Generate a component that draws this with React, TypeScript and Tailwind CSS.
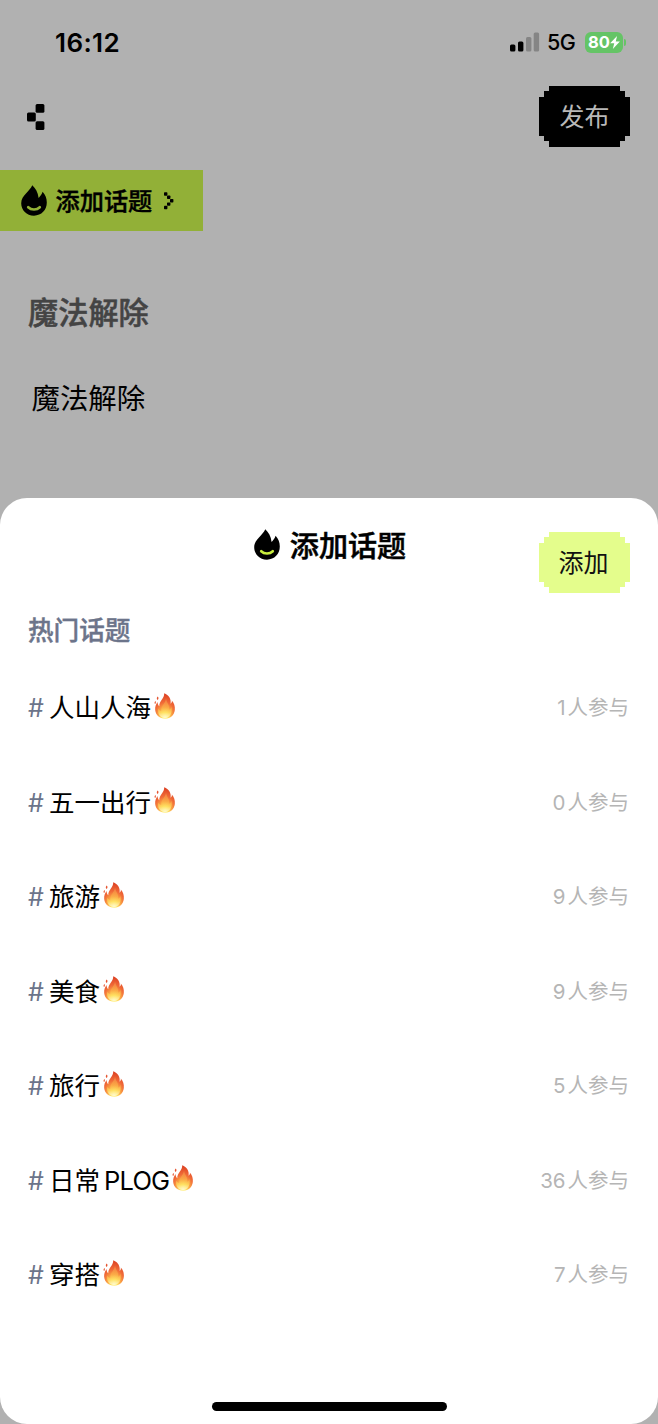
import type { ReactNode } from "react";

const topics = [
  { name: "人山人海", count: 1 },
  { name: "五一出行", count: 0 },
  { name: "旅游", count: 9 },
  { name: "美食", count: 9 },
  { name: "旅行", count: 5 },
  { name: "日常", latin: "PLOG", count: 36 },
  { name: "穿搭", count: 7 },
];

const FlameLogo = ({ smile }: { smile: string }) => (
  <svg width="26" height="31" viewBox="0 0 26 31" className="shrink-0">
    <path
      d="M11.3 0.3C14.4 3.2 17 7.2 17.6 13C19.4 11.2 20.9 9.2 21.6 6.8C24.5 10 25.8 13.5 25.8 17.6C25.8 25 20.4 30.7 13 30.7C5.6 30.7 0.2 25.1 0.2 18.2C0.2 14.2 2.4 11.3 5.2 8.3C7.8 5.5 9.8 3.4 11.3 0.3Z"
      fill="#000"
    />
    <path d="M7.2 22.2C10.3 25.2 15.7 25.2 18.8 22.2" fill="none" stroke={smile} strokeWidth="2.6" strokeLinecap="round" />
  </svg>
);

const Flame = () => (
  <svg width="22" height="26" viewBox="0 0 22 26" className="ml-[3px] -mt-[5px] shrink-0">
    <defs>
      <radialGradient id="flame" cx="0.5" cy="0.9" r="0.88">
        <stop offset="0" stopColor="#fffbb0" />
        <stop offset="0.18" stopColor="#ffe666" />
        <stop offset="0.38" stopColor="#fba544" />
        <stop offset="0.62" stopColor="#f06a37" />
        <stop offset="1" stopColor="#dc4023" />
      </radialGradient>
      <linearGradient id="flameCore" x1="0" y1="0" x2="0" y2="1">
        <stop offset="0" stopColor="#f58b45" />
        <stop offset="0.45" stopColor="#fbae48" />
        <stop offset="0.72" stopColor="#ffdf60" />
        <stop offset="1" stopColor="#fffde6" />
      </linearGradient>
    </defs>
    <path
      d="M10.2 0.2C14.7 2 17.4 5.6 16.6 10.8C17.7 10.1 18.1 9 17.8 7.6C20.1 9.8 21.2 13.3 20.8 17C20.3 22.2 16.5 25.7 11.3 25.7C5.7 25.7 1.6 22.2 1.2 17C0.9 13.8 2 11.2 3.6 9.1C3.7 11.2 4.2 12.5 5.3 13.2C4.9 8.1 10.6 5.4 10.2 0.2Z"
      fill="url(#flame)"
    />
    <path
      d="M12 5.5C12.6 10 15.8 12.2 15.2 16.6C16.3 16 17.2 14.8 17.3 13.4C19 19.4 15.8 24.9 11.1 24.9C6.4 24.9 3.2 20.8 4.3 15.4C4.9 16.9 6.1 17.8 7.4 17.9C6.6 13 11.6 10.4 12 5.5Z"
      fill="url(#flameCore)"
      opacity="0.7"
    />
    <path d="M3.6 3.5C4.9 4.6 4.7 6 3.4 6.9C2.5 5.9 2.6 4.7 3.6 3.5Z" fill="#e5532f" />
    <path d="M1.5 8C2.2 9 1.9 10.3 1 11C0.3 9.9 0.4 8.8 1.5 8Z" fill="#e5532f" />
  </svg>
);

// button with stepped pixel corners
const PixelButton = ({ className, children }: { className: string; children: ReactNode }) => (
  <button
    className={`flex h-[61px] w-[91px] items-center justify-center pt-[3px] text-[25px] [clip-path:polygon(10px_0,81px_0,81px_5px,86px_5px,86px_11px,91px_11px,91px_50px,86px_50px,86px_55px,81px_55px,81px_61px,10px_61px,10px_55px,5px_55px,5px_50px,0_50px,0_11px,5px_11px,5px_5px,10px_5px)] ${className}`}
  >
    {children}
  </button>
);

const StatusBar = () => (
  <div className="flex h-[86px] items-center justify-between pr-[32px] pb-[2px] pl-[55px]">
    <span className="text-[26px] font-semibold tracking-[0.4px]">16:12</span>
    <div className="flex items-center">
      <svg width="30" height="20" viewBox="0 0 30 20">
        <rect x="0" y="12.5" width="5.4" height="7" rx="1.5" />
        <rect x="8" y="9.5" width="5.4" height="10" rx="1.5" />
        <rect x="16" y="5" width="5.4" height="14.5" rx="1.5" fill="#858585" />
        <rect x="23.7" y="0.5" width="5.4" height="19" rx="1.5" fill="#858585" />
      </svg>
      <span className="ml-[7px] w-[30px] text-[21.5px] font-medium tracking-[-0.5px]">5G</span>
      {/* battery */}
      <div className="ml-[8px] flex h-[21px] w-[38px] items-center justify-center rounded-[6px] bg-[#65c466] text-white">
        <span className="text-[16.5px] font-bold">80</span>
        <svg width="10" height="13" viewBox="0 0 9 12">
          <path d="M6.4 0L0 6.8H3.8L2.5 12L9 5H5.2Z" fill="#fff" />
        </svg>
      </div>
      <div className="ml-px h-[7px] w-[2px] rounded-r-full bg-[#65c466]" />
    </div>
  </div>
);

const App = () => {
  return (
    <div className="flex h-[1424px] w-[658px] flex-col overflow-hidden bg-[#b1b1b1] font-['Inter','Noto_Sans_CJK_SC',sans-serif] text-black">
      <StatusBar />

      {/* nav */}
      <div className="flex h-[61px] items-center justify-between pr-[28px] pl-[27px]">
        <svg width="18" height="26" viewBox="0 0 18 26">
          <rect x="8.6" y="0" width="8.8" height="8.8" rx="1.5" />
          <rect x="0" y="8.6" width="8.8" height="8.8" rx="1.5" />
          <rect x="8.6" y="17.2" width="8.8" height="8.8" rx="1.5" />
        </svg>
        <PixelButton className="bg-black text-[#b8b8b8]">发布</PixelButton>
      </div>

      {/* topic chip */}
      <div className="mt-[23px] flex h-[61px] w-[202.5px] items-center bg-[#92b037] pl-[20.5px]">
        <FlameLogo smile="#92b037" />
        <span className="ml-[9px] pt-[3px] text-[24.2px] font-medium [-webkit-text-stroke:0.4px]">添加话题</span>
        <svg width="10" height="18" viewBox="0 0 10 18" className="ml-[12px]">
          <rect x="0" y="0.3" width="3.4" height="3.4" rx="0.7" />
          <rect x="3" y="3.6" width="3.4" height="3.4" rx="0.7" />
          <rect x="6" y="7" width="3.4" height="3.4" rx="0.7" />
          <rect x="3" y="10.4" width="3.4" height="3.4" rx="0.7" />
          <rect x="0" y="13.8" width="3.4" height="3.4" rx="0.7" />
        </svg>
      </div>

      {/* draft */}
      <div className="h-[267px] pt-[62px] pl-[28px]">
        <h1 className="text-[30.2px] leading-[40px] font-medium text-[#444] [-webkit-text-stroke:0.5px]">魔法解除</h1>
        <p className="mt-[46px] pl-[3.5px] text-[28.4px] leading-[40px]">魔法解除</p>
      </div>

      {/* bottom sheet */}
      <div className="flex flex-1 flex-col rounded-[27px] bg-white">
        <div className="grid h-[95px] grid-cols-[1fr_auto_1fr]">
          <div />
          <div className="flex h-[96px] items-center pb-[3px] pl-[2px]">
            <FlameLogo smile="#c9ee3e" />
            <h2 className="ml-[10px] pt-[4px] text-[29.1px] font-medium [-webkit-text-stroke:0.5px]">添加话题</h2>
          </div>
          <div className="flex justify-end pt-[34px] pr-[28px]">
            <PixelButton className="bg-[#e4fd8c] pr-[2px] text-[#111]">添加</PixelButton>
          </div>
        </div>

        <h3 className="mt-[18px] ml-[28px] text-[25.6px] leading-[40px] font-medium text-[#6c748a] [-webkit-text-stroke:0.4px]">
          热门话题
        </h3>

        <ul className="mt-[10px] flex flex-col">
          {topics.map((topic) => (
            <li key={topic.name} className="flex h-[94.5px] items-center justify-between pr-[29px] pl-[28px]">
              <div className="flex items-center text-[25.5px]">
                <span className="w-[21px] pt-px text-[25px] text-[#6c748a]">#</span>
                <span>{topic.name}</span>
                {topic.latin && <span className="ml-[4px] tracking-[-0.8px]">{topic.latin}</span>}
                <Flame />
              </div>
              <div className="flex items-center pt-px text-[20.5px] text-[#b5b5b5]">
                <span className="mr-[2px]">{topic.count}</span>
                <span>人参与</span>
              </div>
            </li>
          ))}
        </ul>

        {/* home indicator */}
        <div className="mx-auto mt-auto mb-[13px] h-[9px] w-[235px] rounded-full bg-black" />
      </div>
    </div>
  );
};

export default App;
